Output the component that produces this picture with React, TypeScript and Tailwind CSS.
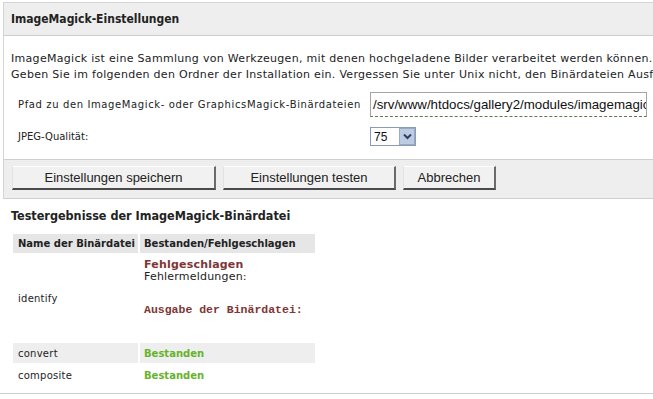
import React from "react";

const SANS = "font-['DejaVu_Sans','Verdana',sans-serif]";
const TITLE = "font-['DejaVu_Sans_Condensed','DejaVu_Sans',sans-serif] font-bold text-[#222]";
const ARIAL = "font-['Liberation_Sans','Arial',sans-serif]";

function Button({ label, width }: { label: string; width: string }) {
  return (
    <button
      className={`${width} h-[24px] ${ARIAL} text-[13px] text-[#222] bg-[#f1f1f1] border-t border-l border-t-[#fdfdfd] border-l-[#e2e2e2] border-r-2 border-b-2 border-r-[#6a6a6a] border-b-[#4a4a4a] flex items-center justify-center`}
    >
      {label}
    </button>
  );
}

function SelectArrow() {
  return (
    <div className="w-[16px] h-[17px] bg-[#bfcbe0] border border-[#9aa9c8] flex items-center justify-center">
      <svg width="9" height="7" viewBox="0 0 9 7">
        <path d="M1 1.5 L4.5 5 L8 1.5" fill="none" stroke="#2d3f6c" strokeWidth="2" />
      </svg>
    </div>
  );
}

export default function App() {
  return (
    <div className={`w-[653px] h-[399px] overflow-hidden bg-white pt-[2px] ${SANS}`}>
      <div className="ml-[3px] w-[900px] border-l border-t border-[#d4d4d4]">
        <div className="h-[33px] bg-[#eeeeee] border-b border-[#cfcfcf] pl-[7px] flex items-center">
          <h2 className={`${TITLE} text-[12px]`}>ImageMagick-Einstellungen</h2>
        </div>

        <div className="pl-[7px] pt-[15px] text-[11px] leading-[16px] tracking-[0.3px] text-[#222] whitespace-nowrap">
          <p>
            ImageMagick ist eine Sammlung von Werkzeugen, mit denen hochgeladene Bilder verarbeitet werden können. Diese Werkzeuge müssen auf Ihrem Server installiert sein.
          </p>
          <p>
            Geben Sie im folgenden den Ordner der Installation ein. Vergessen Sie unter Unix nicht, den Binärdateien Ausführungsrechte zu geben.
          </p>
        </div>

        <div className="mt-[9px] h-[25px] flex items-center">
          <label className="w-[366px] pl-[14px] text-[10px] tracking-[0.62px] text-[#222] whitespace-nowrap">
            Pfad zu den ImageMagick- oder GraphicsMagick-Binärdateien
          </label>
          <div className={`w-[277px] h-[25px] border border-[#a5a5a5] border-b-[#5d7a4f] [border-bottom-style:dashed] pl-[2px] flex items-center ${ARIAL} text-[13.3px] text-[#111] whitespace-nowrap overflow-hidden`}>
            /srv/www/htdocs/gallery2/modules/imagemagick/bin
          </div>
        </div>

        <div className="mt-[10px] h-[19px] flex items-center">
          <label className="w-[366px] pl-[14px] text-[10px] text-[#222]">
            JPEG-Qualität:
          </label>
          <div className="w-[46px] h-[19px] border border-[#8c9ab5] bg-white flex items-center justify-between pl-[3px]">
            <span className={`${ARIAL} text-[12px] text-[#111]`}>75</span>
            <SelectArrow />
          </div>
        </div>

        <div className="mt-[13px] h-[40px] bg-[#eeeeee] border-t border-b border-[#cfcfcf] pl-[8px] pt-[6px] flex gap-[7px]">
          <Button label="Einstellungen speichern" width="w-[204px]" />
          <Button label="Einstellungen testen" width="w-[173px]" />
          <Button label="Abbrechen" width="w-[93px]" />
        </div>
      </div>

      <h3 className={`${TITLE} text-[12.5px] leading-[16px] mt-[9px] pl-[11px]`}>
        Testergebnisse der ImageMagick-Binärdatei
      </h3>

      <table className="mt-[8px] ml-[11px] border-separate border-spacing-[2px] text-[10px] tracking-[0.25px] text-[#222]">
        <thead>
          <tr>
            <th className="w-[125px] h-[19px] bg-[#e6e6e6] text-left font-bold tracking-normal pl-[5px] p-0 align-middle">
              Name der Binärdatei
            </th>
            <th className="w-[175px] h-[19px] bg-[#e6e6e6] text-left font-bold tracking-normal pl-[4px] p-0 align-middle">
              Bestanden/Fehlgeschlagen
            </th>
          </tr>
        </thead>
        <tbody>
          <tr>
            <td className="h-[86px] pl-[5px] align-middle">identify</td>
            <td className="h-[86px] pl-[4px] align-top pt-[4px] text-[11px] tracking-[0.2px]">
              <div className="font-bold text-[#7f3535] leading-[12px] tracking-[0.2px]">Fehlgeschlagen</div>
              <div className="leading-[12px]">Fehlermeldungen:</div>
              <div className="mt-[20px] font-['Liberation_Mono','Courier_New',monospace] font-bold text-[11.5px] leading-[14px] tracking-normal text-[#7f3535]">
                Ausgabe der Binärdatei:
              </div>
            </td>
          </tr>
          <tr>
            <td className="h-[20px] bg-[#eeeeee] pl-[5px] align-middle">convert</td>
            <td className="h-[20px] bg-[#eeeeee] pl-[4px] align-middle font-bold tracking-normal text-[#66b32a]">Bestanden</td>
          </tr>
          <tr>
            <td className="h-[20px] pl-[5px] align-middle">composite</td>
            <td className="h-[20px] pl-[4px] align-middle font-bold tracking-normal text-[#66b32a]">Bestanden</td>
          </tr>
        </tbody>
      </table>

      <div className="mt-[6px] border-t border-[#cccccc]" />
    </div>
  );
}
